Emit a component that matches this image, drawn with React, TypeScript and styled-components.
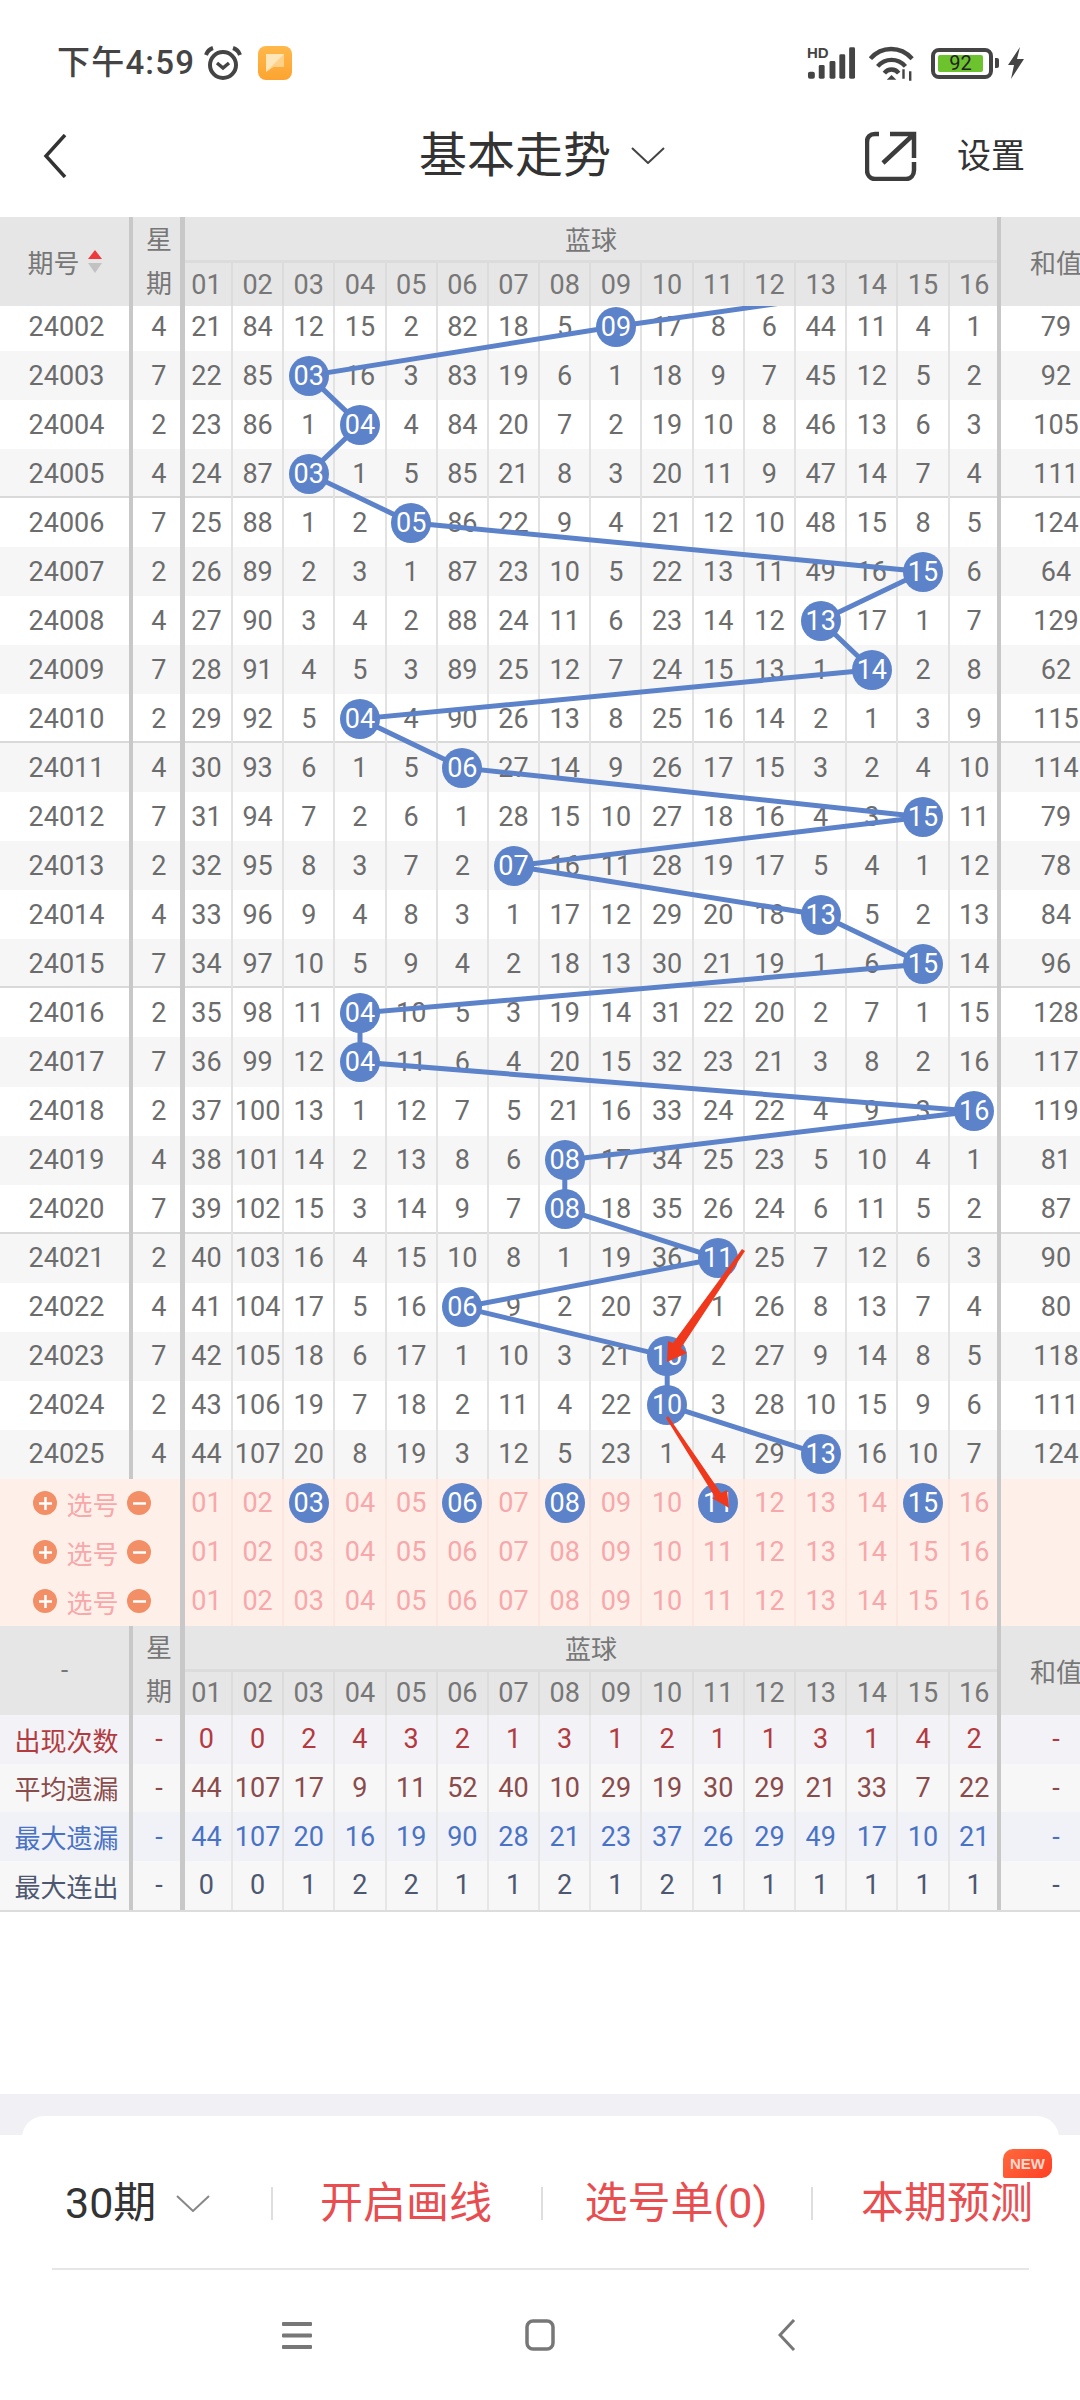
import React from 'react'
import styled, { createGlobalStyle } from 'styled-components'

const GlobalStyle = createGlobalStyle`
  html, body {
    margin: 0;
    padding: 0;
    background: #fff;
  }
  body {
    font-family: Roboto, "Noto Sans CJK SC", sans-serif;
  }
`

const ROW_H = 49.04
const COL_W = 51.2
const BALLS_X = 181.8

const rows = [
  '24002 4 79 21 84 12 15 2 82 18 5 *09 17 8 6 44 11 4 1',
  '24003 7 92 22 85 *03 16 3 83 19 6 1 18 9 7 45 12 5 2',
  '24004 2 105 23 86 1 *04 4 84 20 7 2 19 10 8 46 13 6 3',
  '24005 4 111 24 87 *03 1 5 85 21 8 3 20 11 9 47 14 7 4',
  '24006 7 124 25 88 1 2 *05 86 22 9 4 21 12 10 48 15 8 5',
  '24007 2 64 26 89 2 3 1 87 23 10 5 22 13 11 49 16 *15 6',
  '24008 4 129 27 90 3 4 2 88 24 11 6 23 14 12 *13 17 1 7',
  '24009 7 62 28 91 4 5 3 89 25 12 7 24 15 13 1 *14 2 8',
  '24010 2 115 29 92 5 *04 4 90 26 13 8 25 16 14 2 1 3 9',
  '24011 4 114 30 93 6 1 5 *06 27 14 9 26 17 15 3 2 4 10',
  '24012 7 79 31 94 7 2 6 1 28 15 10 27 18 16 4 3 *15 11',
  '24013 2 78 32 95 8 3 7 2 *07 16 11 28 19 17 5 4 1 12',
  '24014 4 84 33 96 9 4 8 3 1 17 12 29 20 18 *13 5 2 13',
  '24015 7 96 34 97 10 5 9 4 2 18 13 30 21 19 1 6 *15 14',
  '24016 2 128 35 98 11 *04 10 5 3 19 14 31 22 20 2 7 1 15',
  '24017 7 117 36 99 12 *04 11 6 4 20 15 32 23 21 3 8 2 16',
  '24018 2 119 37 100 13 1 12 7 5 21 16 33 24 22 4 9 3 *16',
  '24019 4 81 38 101 14 2 13 8 6 *08 17 34 25 23 5 10 4 1',
  '24020 7 87 39 102 15 3 14 9 7 *08 18 35 26 24 6 11 5 2',
  '24021 2 90 40 103 16 4 15 10 8 1 19 36 *11 25 7 12 6 3',
  '24022 4 80 41 104 17 5 16 *06 9 2 20 37 1 26 8 13 7 4',
  '24023 7 118 42 105 18 6 17 1 10 3 21 *10 2 27 9 14 8 5',
  '24024 2 111 43 106 19 7 18 2 11 4 22 *10 3 28 10 15 9 6',
  '24025 4 124 44 107 20 8 19 3 12 5 23 1 4 29 *13 16 10 7',
].map((line) => {
  const [period, week, sum, ...cells] = line.split(' ')
  return { period, week, sum, cells }
})

const headNums = Array.from({ length: 16 }, (_, i) => String(i + 1).padStart(2, '0'))

const picked = [[3, 6, 8, 11, 15], [], []]

const stats = [
  { label: '出现次数', tone: 'count', values: [0, 0, 2, 4, 3, 2, 1, 3, 1, 2, 1, 1, 3, 1, 4, 2] },
  { label: '平均遗漏', tone: 'avg', values: [44, 107, 17, 9, 11, 52, 40, 10, 29, 19, 30, 29, 21, 33, 7, 22] },
  { label: '最大遗漏', tone: 'max', values: [44, 107, 20, 16, 19, 90, 28, 21, 23, 37, 26, 29, 49, 17, 10, 21] },
  { label: '最大连出', tone: 'run', values: [0, 0, 1, 2, 2, 1, 1, 2, 1, 2, 1, 1, 1, 1, 1, 1] },
] as const

const toneColor = { count: '#b23a40', avg: '#8a4b4b', max: '#4a72c4', run: '#4d5870' }
const toneBg = { count: '#f2f2f7', avg: '#f7f7f7', max: '#f0f2f8', run: '#f7f7f7' }

const colX = (col: number) => BALLS_X + (col + 0.5) * COL_W - 1

const trendPoints = rows.map((r, i) => {
  const col = r.cells.findIndex((c) => c.startsWith('*'))
  return `${colX(col)},${(i + 0.5) * ROW_H}`
})
// the line carries on to the previous draw, above the visible rows
const linePoints = [`${colX(14.75)},${-0.5 * ROW_H}`, ...trendPoints].join(' ')

const Page = styled.div`
  width: 1080px;
  height: 2400px;
  overflow: hidden;
  display: flex;
  flex-direction: column;
  background: #fff;
`

const StatusBar = styled.div`
  height: 90px;
  flex: none;
  display: flex;
  justify-content: space-between;
  align-items: flex-start;
  padding: 45px 55px 0 57px;
  box-sizing: border-box;
`

const StatusSide = styled.div`
  display: flex;
  align-items: center;
  height: 36px;
`

const Clock = styled.span`
  font-size: 33px;
  font-weight: 500;
  letter-spacing: 1.2px;
  color: #444;
  line-height: 36px;
  margin-right: 8px;
`

const NoteIcon = styled.div`
  width: 34px;
  height: 34px;
  margin-left: 15px;
  border-radius: 8px;
  background: linear-gradient(180deg, #ffb84a, #fca431);
  display: flex;
  align-items: center;
  justify-content: center;
`

const SignalWrap = styled.div`
  position: relative;
  width: 49px;
  height: 34px;
`

const HdLabel = styled.span`
  position: absolute;
  left: 0;
  top: 0;
  font-family: "Liberation Sans", sans-serif;
  font-size: 15px;
  font-weight: 700;
  line-height: 13px;
  color: #444;
`

const WifiIcon = styled.svg`
  margin-left: 13px;
`

const Battery = styled.div`
  width: 62px;
  height: 31px;
  margin-left: 16px;
  box-sizing: border-box;
  border: 4px solid #444;
  border-radius: 8px;
  padding: 3px 6px 3px 3px;
  display: flex;
`

const BatteryFill = styled.div`
  flex: 1;
  background: #6cc32e;
  border-radius: 2px;
  color: #222;
  font-size: 20px;
  line-height: 17px;
  text-align: center;
`

const BatteryTip = styled.div`
  width: 4px;
  height: 10px;
  margin-left: 2px;
  border-radius: 0 2px 2px 0;
  background: #444;
`

const BoltIcon = styled.svg`
  margin-left: 8px;
`

const NavBar = styled.div`
  height: 127px;
  flex: none;
  display: grid;
  grid-template-columns: 1fr auto 1fr;
  align-items: center;
  padding: 4px 55px 0 43px;
  box-sizing: border-box;
`

const TitleGroup = styled.div`
  display: flex;
  align-items: center;
  gap: 20px;
  margin-left: 16px;
`

const Title = styled.span`
  font-size: 48px;
  color: #333;
  line-height: 56px;
`

const NavRight = styled.div`
  display: flex;
  justify-content: flex-end;
  align-items: center;
  gap: 40px;
`

const NavSetting = styled.span`
  font-size: 34px;
  color: #333;
  margin-bottom: 4px;
`

const Table = styled.div`
  position: relative;
  width: 1080px;
  flex: none;
  overflow: hidden;
  border-bottom: 2px solid #dcdcdc;
`

const Line = styled.div<{ $h?: number; $bg?: string; $split?: boolean }>`
  display: flex;
  width: 1112px;
  height: ${(p) => p.$h ?? ROW_H}px;
  background: ${(p) => p.$bg ?? 'transparent'};
  box-sizing: border-box;
  ${(p) => (p.$split ? 'box-shadow: inset 0 -2px 0 #d9d9d9;' : '')}
`

const PeriodCell = styled.div<{ $color?: string }>`
  width: 133px;
  flex: none;
  box-sizing: border-box;
  border-right: 4px solid #c8c8c8;
  padding-left: 4px;
  display: flex;
  align-items: center;
  justify-content: center;
  font-size: 27px;
  color: ${(p) => p.$color ?? '#6c6c6c'};
`

const StatLabel = styled(PeriodCell)`
  font-size: 26px;
`

const WeekCell = styled.div<{ $color?: string }>`
  width: 48.8px;
  flex: none;
  box-sizing: border-box;
  border-right: 2px solid #c8c8c8;
  padding-left: 5px;
  display: flex;
  align-items: center;
  justify-content: center;
  font-size: 27px;
  color: ${(p) => p.$color ?? '#6c6c6c'};
`

/* the thick dividers left and right of the number columns run under the first and last cell */
const BallStrip = styled.div`
  width: 819.2px;
  flex: none;
  display: flex;
  box-shadow: inset 3px 0 0 #c8c8c8, inset -4px 0 0 #c8c8c8;
`

const NumCell = styled.div<{ $color?: string; $line?: string }>`
  width: ${COL_W}px;
  flex: none;
  box-sizing: border-box;
  border-right: 2px solid ${(p) => p.$line ?? '#e2e2e2'};
  display: flex;
  align-items: center;
  justify-content: center;
  font-size: 27px;
  white-space: nowrap;
  color: ${(p) => p.$color ?? '#6c6c6c'};
`

const SumCell = styled.div<{ $color?: string }>`
  width: 110px;
  flex: none;
  display: flex;
  align-items: center;
  justify-content: center;
  font-size: 27px;
  color: ${(p) => p.$color ?? '#6c6c6c'};
`

const Ball = styled.span`
  position: relative;
  z-index: 2;
  width: 40px;
  height: 40px;
  flex: none;
  border-radius: 50%;
  background: #5c82c9;
  color: #fff;
  display: flex;
  align-items: center;
  justify-content: center;
  font-size: 27px;
`

const HeadWrap = styled.div`
  position: relative;
  z-index: 4;
  display: flex;
  width: 1112px;
  height: 89px;
  background: #e6e6e6;
`

const HeadWeek = styled(WeekCell)`
  flex-direction: column;
  gap: 10px;
  font-size: 26px;
  line-height: 34px;
  color: #777;
`

const HeadBalls = styled(BallStrip)`
  flex-direction: column;
`

const HeadBand = styled.div`
  height: 46px;
  flex: none;
  margin: 0 4px 0 3px;
  box-sizing: border-box;
  border-bottom: 3px solid #dcdcdc;
  display: flex;
  align-items: center;
  justify-content: center;
  font-size: 26px;
  color: #777;
`

const HeadNums = styled.div`
  flex: 1;
  display: flex;
`

const PeriodHead = styled(PeriodCell)`
  gap: 8px;
  padding-left: 0;
  font-size: 26px;
  color: #777;
`

const SortArrows = styled.div`
  display: flex;
  flex-direction: column;
  gap: 4px;
`

const SortArrow = styled.span<{ $dir: 'up' | 'down' }>`
  width: 0;
  height: 0;
  border-left: 7px solid transparent;
  border-right: 7px solid transparent;
  ${(p) =>
    p.$dir === 'up' ? 'border-bottom: 9px solid #ee3a3c;' : 'border-top: 10px solid #c2c2c2;'}
`

const SumHead = styled(SumCell)`
  font-size: 26px;
  color: #777;
`

const PickLabel = styled.div`
  width: 181.8px;
  flex: none;
  box-sizing: border-box;
  border-right: 2px solid #c8c8c8;
  padding-left: 5px;
  display: flex;
  align-items: center;
  justify-content: center;
  gap: 9px;
  font-size: 26px;
  color: #f7a8aa;
`

const RoundBtn = styled.span`
  width: 24px;
  height: 24px;
  border-radius: 50%;
  background: #f38f66;
  display: flex;
  align-items: center;
  justify-content: center;
  flex: none;
`

const TrendLayer = styled.svg`
  position: absolute;
  left: 0;
  top: 0;
  z-index: 1;
  pointer-events: none;
`

const ArrowLayer = styled.svg`
  position: absolute;
  left: 0;
  top: 0;
  z-index: 5;
  pointer-events: none;
`

const BodyWrap = styled.div`
  position: relative;
  margin-top: -4px;
`

const Footer = styled.div`
  margin-top: auto;
  height: 306px;
  flex: none;
  box-sizing: border-box;
  padding: 22px 21px 0 22px;
  background: linear-gradient(#f1f1f5 41px, #fff 41px);
`

const Card = styled.div`
  height: 284px;
  background: #fff;
  border-radius: 22px 22px 0 0;
  display: flex;
  flex-direction: column;
`

const Actions = styled.div`
  height: 154px;
  flex: none;
  margin: 0 30px;
  display: grid;
  grid-template-columns: 219px 270px 270px 1fr;
  border-bottom: 2px solid #e6e6e6;
  box-sizing: border-box;
`

const Action = styled.div<{ $first?: boolean; $red?: boolean; $last?: boolean }>`
  position: relative;
  display: flex;
  align-items: center;
  justify-content: ${(p) => (p.$first ? 'flex-start' : 'center')};
  padding: 22px 0 0 ${(p) => (p.$first ? '13px' : p.$last ? '50px' : '0')};
  font-size: 43px;
  line-height: 60px;
  gap: 20px;
  color: ${(p) => (p.$red ? '#e84d50' : '#333')};
  white-space: nowrap;
  ${(p) =>
    p.$first
      ? ''
      : `&::before {
    content: '';
    position: absolute;
    left: 0;
    top: 71px;
    width: 2px;
    height: 33px;
    background: #dedede;
  }`}
`

const NewBadge = styled.span`
  position: absolute;
  right: -19px;
  top: 33px;
  width: 49px;
  height: 29px;
  border-radius: 10px 10px 10px 2px;
  background: linear-gradient(135deg, #ff6a3c, #ff3f25);
  color: #ffd9cf;
  font-family: "Liberation Sans", sans-serif;
  font-size: 15px;
  font-weight: 700;
  line-height: 29px;
  text-align: center;
`

const BottomNav = styled.div`
  flex: 1;
  display: flex;
  align-items: center;
  justify-content: center;
  gap: 213px;
  padding-right: 4px;
`

const BackKey = styled.svg`
  margin-left: 10px;
`

const AlarmIcon = () => (
  <svg width="40" height="36" viewBox="0 0 40 36" fill="none" stroke="#444">
    <circle cx="20" cy="20" r="13" strokeWidth="4" />
    <path d="M14 18l6 5 6-5" strokeWidth="3.5" />
    <path d="M3 10c1-3 4-6 7-7M37 10c-1-3-4-6-7-7" strokeWidth="4" />
  </svg>
)

const BackIcon = () => (
  <svg width="24" height="44" viewBox="0 0 24 44" fill="none" stroke="#333" strokeWidth="3.5">
    <path d="M22 1L3 22l19 21" />
  </svg>
)

const Chevron = ({ size, color }: { size: number; color: string }) => (
  <svg width={size} height={size * 0.5} viewBox="0 0 34 17" fill="none" stroke={color} strokeWidth="2">
    <path d="M1 1l16 15L33 1" />
  </svg>
)

const ShareIcon = () => (
  <svg width="52" height="50" viewBox="0 0 52 50" fill="none" stroke="#3c3c3c" strokeWidth="4.5">
    <path d="M14 3H10C5 3 2 6 2 11v28c0 5 3 9 8 9h31c5 0 8-4 8-9v-8" />
    <path d="M18 32L48 4M25 3h24v24" />
  </svg>
)

const PlusMinus = ({ plus }: { plus?: boolean }) => (
  <RoundBtn>
    <svg width="15" height="15" viewBox="0 0 15 15" stroke="#fff" strokeWidth="2.5">
      <path d="M1 7.5h13" />
      {plus && <path d="M7.5 1v13" />}
    </svg>
  </RoundBtn>
)

const TableHead = ({ period }: { period: React.ReactNode }) => (
  <HeadWrap>
    <PeriodHead>{period}</PeriodHead>
    <HeadWeek>
      <span>星</span>
      <span>期</span>
    </HeadWeek>
    <HeadBalls>
      <HeadBand>蓝球</HeadBand>
      <HeadNums>
        {headNums.map((n, i) => (
          <NumCell key={n} $color="#777" $line={i === 15 ? 'transparent' : '#dcdcdc'}>
            {n}
          </NumCell>
        ))}
      </HeadNums>
    </HeadBalls>
    <SumHead>和值</SumHead>
  </HeadWrap>
)

export default function App() {
  return (
    <Page>
      <GlobalStyle />
      <StatusBar>
        <StatusSide>
          <Clock>下午4:59</Clock>
          <AlarmIcon />
          <NoteIcon>
            <svg width="20" height="20" viewBox="0 0 20 20">
              <path d="M1 1h18v13H8l-7 5z" fill="#ffe6b8" />
              <path d="M1 19L19 1v13H8z" fill="#ffd088" />
            </svg>
          </NoteIcon>
        </StatusSide>
        <StatusSide>
          <SignalWrap>
            <HdLabel>HD</HdLabel>
            <svg width="49" height="34" viewBox="0 0 50 34" fill="#444">
              <rect x="1" y="26" width="7" height="7" rx="2" />
              <rect x="12" y="19" width="6" height="14" rx="1.5" />
              <rect x="23" y="15" width="6" height="18" rx="1.5" />
              <rect x="33" y="8" width="6" height="25" rx="1.5" />
              <rect x="43" y="1" width="6" height="32" rx="1.5" />
            </svg>
          </SignalWrap>
          <WifiIcon width="46" height="35" viewBox="0 0 48 36" fill="none" stroke="#444" strokeWidth="4.5">
            <path d="M1.5 13C13-.5 33-.5 45 13" />
            <path d="M9 21c8-9 21-9 29 0" />
            <path d="M16 28c4-5 11-5 15 0" />
            <path d="M23.5 30l5 5h-10z" fill="#444" stroke="none" />
            <path d="M36 24v10M43 26v10" strokeWidth="2.5" />
          </WifiIcon>
          <Battery>
            <BatteryFill>92</BatteryFill>
          </Battery>
          <BatteryTip />
          <BoltIcon width="18" height="32" viewBox="0 0 18 32" fill="#444">
            <path d="M13 0L1 18h6L4 32l13-20h-7z" />
          </BoltIcon>
        </StatusSide>
      </StatusBar>

      <NavBar>
        <BackIcon />
        <TitleGroup>
          <Title>基本走势</Title>
          <Chevron size={34} color="#444" />
        </TitleGroup>
        <NavRight>
          <ShareIcon />
          <NavSetting>设置</NavSetting>
        </NavRight>
      </NavBar>

      <Table>
        <TableHead
          period={
            <>
              <span>期号</span>
              <SortArrows>
                <SortArrow $dir="up" />
                <SortArrow $dir="down" />
              </SortArrows>
            </>
          }
        />
        <BodyWrap>
          {rows.map((r, i) => (
            <Line key={r.period} $bg={i % 2 ? '#f6f6f6' : '#fff'} $split={i % 5 === 3 && i < 20}>
              <PeriodCell>{r.period}</PeriodCell>
              <WeekCell>{r.week}</WeekCell>
              <BallStrip>
                {r.cells.map((c, j) => (
                  <NumCell key={j} $line={j === 15 ? 'transparent' : '#e2e2e2'}>
                    {c.startsWith('*') ? <Ball>{c.slice(1)}</Ball> : c}
                  </NumCell>
                ))}
              </BallStrip>
              <SumCell>{r.sum}</SumCell>
            </Line>
          ))}
          <TrendLayer width="1080" height={ROW_H * 24} viewBox={`0 0 1080 ${ROW_H * 24}`}>
            <polyline points={linePoints} fill="none" stroke="#5c82c9" strokeWidth="5" />
          </TrendLayer>
        </BodyWrap>

        {picked.map((balls, i) => (
          <Line key={i} $bg="#ffefe9" $h={49}>
            <PickLabel>
              <PlusMinus plus />
              <span>选号</span>
              <PlusMinus />
            </PickLabel>
            <BallStrip>
              {headNums.map((n, j) => (
                <NumCell key={n} $color="#f7a8aa" $line={j === 15 ? 'transparent' : '#fbe6e0'}>
                  {balls.includes(j + 1) ? <Ball>{n}</Ball> : n}
                </NumCell>
              ))}
            </BallStrip>
            <SumCell />
          </Line>
        ))}

        <TableHead period="-" />

        {stats.map((s) => (
          <Line key={s.label} $bg={toneBg[s.tone]} $h={48.75}>
            <StatLabel $color={toneColor[s.tone]}>{s.label}</StatLabel>
            <WeekCell $color={toneColor[s.tone]}>-</WeekCell>
            <BallStrip>
              {s.values.map((v, j) => (
                <NumCell key={j} $color={toneColor[s.tone]} $line={j === 15 ? 'transparent' : '#e6e6e6'}>
                  {v}
                </NumCell>
              ))}
            </BallStrip>
            <SumCell $color={toneColor[s.tone]}>-</SumCell>
          </Line>
        ))}

        <ArrowLayer width="1080" height="1700" viewBox="0 217 1080 1700">
          <polygon
            points="742,1249 745,1251 681,1348 687,1353 667,1362 668,1341 673,1343"
            fill="#f0391c"
          />
          <polygon
            points="668,1416 666,1418 715,1497 712,1498 729,1508 727,1490 721,1493"
            fill="#f0391c"
          />
        </ArrowLayer>
      </Table>

      <Footer>
        <Card>
          <Actions>
            <Action $first>
              <span>30期</span>
              <Chevron size={34} color="#888" />
            </Action>
            <Action $red>开启画线</Action>
            <Action $red>选号单(0)</Action>
            <Action $red $last>
              本期预测
              <NewBadge>NEW</NewBadge>
            </Action>
          </Actions>
          <BottomNav>
            <svg width="30" height="27" viewBox="0 0 30 27" fill="#777">
              <rect width="30" height="4" rx="1" />
              <rect y="11.5" width="30" height="4" rx="1" />
              <rect y="23" width="30" height="4" rx="1" />
            </svg>
            <svg width="30" height="32" viewBox="0 0 30 32" fill="none" stroke="#777" strokeWidth="3.5">
              <rect x="2" y="2" width="26" height="28" rx="6" />
            </svg>
            <BackKey width="18" height="32" viewBox="0 0 18 32" fill="none" stroke="#777" strokeWidth="3">
              <path d="M16 1L2 16l14 15" />
            </BackKey>
          </BottomNav>
        </Card>
      </Footer>
    </Page>
  )
}
